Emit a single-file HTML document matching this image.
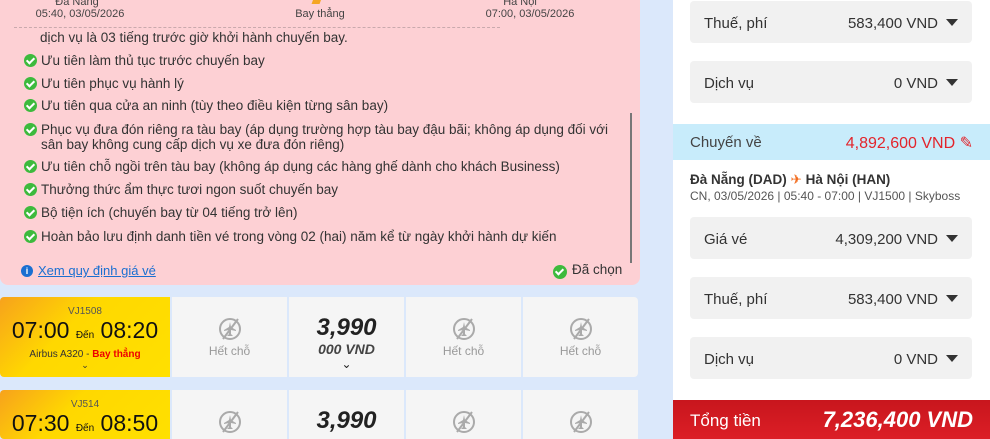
<!DOCTYPE html>
<html><head><meta charset="utf-8"><style>
*{margin:0;padding:0;box-sizing:border-box}
html,body{width:990px;height:439px;overflow:hidden}
body{background:#dbe8fb;font-family:"Liberation Sans","DejaVu Sans",sans-serif;position:relative;color:#333}
.pink{position:absolute;left:0;top:0;width:640px;height:285px;background:#fdd0d4;border-radius:0 0 8px 8px}
.hd{position:absolute;font-size:11px;color:#444;text-align:center;white-space:nowrap}
.li{position:absolute;left:24px;font-size:13.5px;color:#333;display:flex;gap:4px;line-height:15px}
.ck{width:13px;height:13px;border-radius:50%;background:#3dba3d;flex:none;margin-top:1px;position:relative}
.ck:after{content:"";position:absolute;left:4px;top:2px;width:3px;height:6px;border:solid #fff;border-width:0 2px 2px 0;transform:rotate(45deg)}
.row{position:absolute;left:0;width:638px;height:80px;overflow:hidden}
.y{position:absolute;left:0;top:0;width:170px;height:80px;background:linear-gradient(135deg,#f7a21c,#ffd800 40%,#ffe000);border-radius:4px 0 0 4px;text-align:center;overflow:hidden}
.c{position:absolute;top:0;width:115px;height:80px;background:#f5f5f5;text-align:center;color:#999;font-size:12px;overflow:hidden}
.r2 .y,.r2 .c{height:49px}
.c svg{display:block;margin:20px auto 3px}
.right{position:absolute;left:673px;top:0;width:317px;height:439px;background:#fff}
.box{position:absolute;left:17px;width:282px;height:42px;background:#f1f1f1;border-radius:4px;font-size:15px;color:#333}
.box .l{position:absolute;left:14px;top:14px}
.box .r{position:absolute;right:14px;top:14px}
.tri{display:inline-block;width:0;height:0;border-left:6px solid transparent;border-right:6px solid transparent;border-top:7px solid #333;margin-left:8px;vertical-align:2px}
</style></head><body>
<div class="pink"></div>
<div class="hd" style="left:52px;top:-4px;width:50px">Đà Nẵng</div>
<div class="hd" style="left:30px;top:8px;width:100px">05:40, 03/05/2026</div>
<div class="hd" style="left:285px;top:8px;width:70px">Bay thẳng</div>
<div style="position:absolute;left:313px;top:-4px;width:8px;height:8px;background:#f5a623;transform:skewX(-20deg)"></div>
<div class="hd" style="left:495px;top:-4px;width:50px">Hà Nội</div>
<div class="hd" style="left:480px;top:8px;width:100px">07:00, 03/05/2026</div>
<div style="position:absolute;left:14px;top:27px;width:486px;border-top:1px dashed #c9a9ad"></div>
<div class="li" style="top:30px;left:40px">dịch vụ là 03 tiếng trước giờ khởi hành chuyến bay.</div>
<div class="li" style="top:53px"><span class="ck"></span>Ưu tiên làm thủ tục trước chuyến bay</div>
<div class="li" style="top:76px"><span class="ck"></span>Ưu tiên phục vụ hành lý</div>
<div class="li" style="top:98px"><span class="ck"></span>Ưu tiên qua cửa an ninh (tùy theo điều kiện từng sân bay)</div>
<div class="li" style="top:122px;width:600px"><span class="ck"></span>Phục vụ đưa đón riêng ra tàu bay (áp dụng trường hợp tàu bay đậu bãi; không áp dụng đối với sân bay không cung cấp dịch vụ xe đưa đón riêng)</div>
<div class="li" style="top:159px"><span class="ck"></span>Ưu tiên chỗ ngồi trên tàu bay (không áp dụng các hàng ghế dành cho khách Business)</div>
<div class="li" style="top:182px"><span class="ck"></span>Thưởng thức ẩm thực tươi ngon suốt chuyến bay</div>
<div class="li" style="top:205px"><span class="ck"></span>Bộ tiện ích (chuyến bay từ 04 tiếng trở lên)</div>
<div class="li" style="top:229px"><span class="ck"></span>Hoàn bảo lưu định danh tiền vé trong vòng 02 (hai) năm kể từ ngày khởi hành dự kiến</div>
<div style="position:absolute;left:630px;top:113px;width:2px;height:150px;background:#777"></div>
<div style="position:absolute;left:21px;top:265px;width:12px;height:12px;border-radius:50%;background:#1a6fd1;color:#fff;font-size:9px;text-align:center;line-height:12px;font-weight:bold">i</div>
<div style="position:absolute;left:38px;top:263px;font-size:13px;color:#1a6fd1;text-decoration:underline">Xem quy định giá vé</div>
<div class="ck" style="position:absolute;left:553px;top:264px;width:14px;height:14px"></div>
<div style="position:absolute;left:572px;top:262px;font-size:13.5px;color:#333">Đã chọn</div>

<svg width="0" height="0" style="position:absolute"><defs><g id="np"><circle cx="12" cy="12" r="10" fill="none" stroke="#aaa" stroke-width="2"/><line x1="20" y1="2" x2="5" y2="22" stroke="#aaa" stroke-width="2"/><path d="M12 5 L13 10 L18 13 L18 14 L13 13 L13 17 L15 19 L9 19 L11 17 L11 13 L6 14 L6 13 L11 10 Z" fill="#aaa"/></g></defs></svg>

<div class="row" style="top:297px">
<div class="y"><div style="font-size:10px;color:#555;padding-top:9px">VJ1508</div>
<div style="font-size:23px;color:#111;line-height:26px">07:00 <span style="font-size:10px">Đến</span> 08:20</div>
<div style="font-size:10px;color:#333">Airbus A320 - <b style="color:#e00">Bay thẳng</b></div><div style="font-size:9px">⌄</div></div>
<div class="c" style="left:172px"><svg width="24" height="24"><use href="#np"/></svg>Hết chỗ</div>
<div class="c" style="left:289px;color:#222"><div style="font-size:24px;font-weight:bold;font-style:italic;padding-top:18px;line-height:26px">3,990</div><div style="font-size:14px;font-style:italic;font-weight:bold;color:#444">000 VND</div><div>⌄</div></div>
<div class="c" style="left:406px"><svg width="24" height="24"><use href="#np"/></svg>Hết chỗ</div>
<div class="c" style="left:523px;border-radius:0 4px 4px 0"><svg width="24" height="24"><use href="#np"/></svg>Hết chỗ</div>
</div>
<div class="row r2" style="top:390px;height:49px">
<div class="y"><div style="font-size:10px;color:#555;padding-top:9px">VJ514</div>
<div style="font-size:23px;color:#111;line-height:26px">07:30 <span style="font-size:10px">Đến</span> 08:50</div></div>
<div class="c" style="left:172px"><svg width="24" height="24"><use href="#np"/></svg></div>
<div class="c" style="left:289px;color:#222"><div style="font-size:24px;font-weight:bold;font-style:italic;padding-top:18px;line-height:26px">3,990</div></div>
<div class="c" style="left:406px"><svg width="24" height="24"><use href="#np"/></svg></div>
<div class="c" style="left:523px"><svg width="24" height="24"><use href="#np"/></svg></div>
</div>

<div class="right">
<div class="box" style="top:1px"><span class="l">Thuế, phí</span><span class="r">583,400 VND<i class="tri"></i></span></div>
<div class="box" style="top:61px"><span class="l">Dịch vụ</span><span class="r">0 VND<i class="tri"></i></span></div>
<div style="position:absolute;left:0;top:124px;width:317px;height:36px;background:#c8ecfb"></div>
<div style="position:absolute;left:17px;top:134px;font-size:15px;color:#444">Chuyến về</div>
<div style="position:absolute;right:17px;top:133px;font-size:16px;color:#e3242b">4,892,600 VND ✎</div>
<div style="position:absolute;left:17px;top:172px;font-size:13.5px;font-weight:bold;color:#333">Đà Nẵng (DAD) <span style="color:#f26b1d">✈</span> Hà Nội (HAN)</div>
<div style="position:absolute;left:17px;top:189px;font-size:12px;color:#555">CN, 03/05/2026 | 05:40 - 07:00 | VJ1500 | Skyboss</div>
<div class="box" style="top:217px"><span class="l">Giá vé</span><span class="r">4,309,200 VND<i class="tri"></i></span></div>
<div class="box" style="top:277px"><span class="l">Thuế, phí</span><span class="r">583,400 VND<i class="tri"></i></span></div>
<div class="box" style="top:337px"><span class="l">Dịch vụ</span><span class="r">0 VND<i class="tri"></i></span></div>
<div style="position:absolute;left:0;top:400px;width:317px;height:39px;background:linear-gradient(#c8161d,#dc1e26)"></div>
<div style="position:absolute;left:17px;top:411px;font-size:17px;color:#fff">Tổng tiền</div>
<div style="position:absolute;right:17px;top:407px;font-size:22px;color:#fff;font-weight:bold;font-style:italic">7,236,400 VND</div>
</div>
</body></html>
